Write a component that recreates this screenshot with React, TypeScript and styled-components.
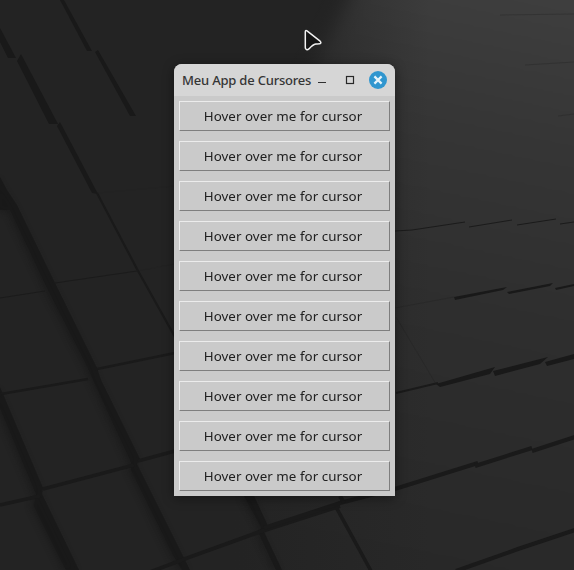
import React from "react";
import styled, { createGlobalStyle } from "styled-components";

const GlobalStyle = createGlobalStyle`
  *, *::before, *::after { box-sizing: border-box; }
  body { margin: 0; background: #232323; overflow: hidden; }
`;

const Desktop = styled.main`
  position: relative;
  width: 574px;
  height: 570px;
  padding: 64px 179px 0 174px;
  overflow: hidden;
  background: #232323;
`;

const Wallpaper = styled.svg`
  position: absolute;
  inset: 0;
`;

const Pointer = styled.svg`
  position: absolute;
  left: 302px;
  top: 27px;
`;

const AppWindow = styled.section`
  position: relative;
  width: 221px;
  height: 432px;
  border-radius: 8px 8px 0 0;
  background: #cacaca;
  box-shadow: 0 2px 12px rgba(0, 0, 0, 0.42);
  overflow: hidden;
`;

const TitleBar = styled.header`
  display: flex;
  align-items: center;
  height: 32px;
  padding: 0 8px;
  background: #d6d6d6;
`;

const Title = styled.h1`
  flex: 1;
  margin: 0;
  font: 500 13px/32px "Noto Sans", sans-serif;
  letter-spacing: -0.2px;
  color: #353535;
  white-space: nowrap;
`;

const Controls = styled.div`
  display: flex;
  align-items: center;
  gap: 10px;
`;

const Control = styled.button<{ $accent?: boolean }>`
  display: grid;
  place-items: center;
  width: 18px;
  height: 18px;
  padding: 0;
  border: 0;
  border-radius: 50%;
  background: ${(p) => (p.$accent ? "#3096cf" : "transparent")};
`;

const ButtonList = styled.div`
  display: grid;
  grid-auto-rows: 30px;
  gap: 10px;
  padding: 5px;
`;

const HoverButton = styled.button<{ $cursor: string }>`
  padding: 0 3px 0 0;
  border: 1px solid;
  border-color: #ececec #7e7e7e #7e7e7e #ececec;
  border-radius: 0;
  background: #cacaca;
  color: #202020;
  font: 400 13.33px/28px "Noto Sans", sans-serif;
  letter-spacing: 0.06px;
  white-space: nowrap;
  cursor: ${(p) => p.$cursor};
`;

const cursors = [
  "pointer", "crosshair", "text", "wait", "help",
  "move", "progress", "not-allowed", "grab", "cell",
];

const blocks = [
  "60,0 64,0 92,51 87,51",
  "95,52 98,50 136,116 130,116",
  "0,28 16,58 8,58 0,42",
  "21,54 17,61 49,124 58,124",
  "60,122 57,126 92,193 98,194",
  "454,297 455,300 503,290 507,287",
  "507,292 509,294 550,286 553,283",
  "555,288 556,290 574,286 574,284",
  "436,384 440,387 490,374 495,367",
  "493,371 495,376 540,364 548,357",
  "545,362 547,366 574,359 574,354",
];

const trenches = [
  "0,177 7,190 17,205 55,283 97,368 101,380 140,459 137,464 183,556 190,570 182,570 173,555 131,470 131,462 93,380 88,368 48,290 10,210 0,210",
  "0,387 43,488 42,494 79,570 66,570 34,506 36,494 0,408",
  "244,496 254,496 268,526 264,532 282,570 276,570 259,534 261,527",
];

const seams: [string, number][] = [
  ["M97 193L137 269L175 337", 2.2],
  ["M1 394L88 379", 2.6],
  ["M97 369L175 353", 2.6],
  ["M43 489L134 465", 3.4],
  ["M138 461L175 451", 3.4],
  ["M0 505L40 496", 3.4],
  ["M150 572L190 557L262 531L340 506", 4],
  ["M264 528L340 503L398 488L478 463", 4],
  ["M475 466L532 448", 4],
  ["M532 451L575 437", 4],
  ["M340 496L344 503", 4],
  ["M336 507L371 571", 3.6],
  ["M396 393L438 383", 2],
  ["M456 571L518 549L575 530", 4],
];

const hairlines =
  "M0 298L45 291M55 283L137 271M395 231L412 230L465 222M469 227L512 220M517 225L556 219M560 224L574 222";
const faintLines =
  "M98 193L175 186M137 271L175 264M395 308L454 297M396 317L436 384M500 15L574 14M525 65L574 62M558 116L574 114";

const WallpaperArt = () => (
  <Wallpaper width="574" height="570" viewBox="0 0 574 570" aria-hidden="true">
    <defs>
      <linearGradient id="light" x1="550" y1="0" x2="430" y2="570" gradientUnits="userSpaceOnUse">
        <stop offset="0" stopColor="#3e3e3e" />
        <stop offset=".25" stopColor="#353535" />
        <stop offset=".55" stopColor="#2e2e2e" />
        <stop offset="1" stopColor="#282828" />
      </linearGradient>
      <linearGradient id="fade" x1="230" y1="0" x2="430" y2="0" gradientUnits="userSpaceOnUse">
        <stop offset="0" stopColor="#232323" />
        <stop offset="1" stopColor="#232323" stopOpacity="0" />
      </linearGradient>
      <filter id="wide" x="-20%" y="-20%" width="140%" height="140%" colorInterpolationFilters="sRGB">
        <feGaussianBlur stdDeviation="9" />
      </filter>
      <filter id="soft" x="-30" y="-30" width="634" height="630" filterUnits="userSpaceOnUse" colorInterpolationFilters="sRGB">
        <feGaussianBlur stdDeviation="3" />
      </filter>
      <filter id="edge" x="-10" y="-10" width="594" height="590" filterUnits="userSpaceOnUse" colorInterpolationFilters="sRGB">
        <feGaussianBlur stdDeviation=".6" />
      </filter>
    </defs>
    <rect width="574" height="570" fill="#232323" />
    <path d="M362 -30L310 75L245 180V620H620V-30Z" fill="url(#light)" filter="url(#wide)" />
    <rect x="200" width="240" height="570" fill="url(#fade)" />
    <g fill="#191919" filter="url(#edge)">
      {trenches.map((points) => (
        <g key={points}>
          <polygon points={points} transform="translate(-3 1)" filter="url(#soft)" opacity=".7" />
          <polygon points={points} opacity=".85" />
        </g>
      ))}
      {blocks.map((points) => <polygon key={points} points={points} />)}
      {seams.map(([d, width]) => (
        <path key={d} d={d} fill="none" stroke="#1a1a1a" strokeWidth={width} />
      ))}
      <path d={hairlines} fill="none" stroke="#1b1b1b" strokeWidth="1" />
      <path d={faintLines} fill="none" stroke="#202020" strokeWidth=".7" opacity=".45" />
    </g>
  </Wallpaper>
);

export default function App() {
  return (
    <>
      <GlobalStyle />
      <Desktop>
        <WallpaperArt />
        <AppWindow>
          <TitleBar>
            <Title>Meu App de Cursores</Title>
            <Controls>
              <Control aria-label="Minimizar">
                <svg width="18" height="18"><path d="M5 11.5h8" stroke="#303030" /></svg>
              </Control>
              <Control aria-label="Maximizar">
                <svg width="18" height="18"><rect x="5.5" y="5.5" width="7" height="7" fill="none" stroke="#282828" strokeWidth="1.2" /></svg>
              </Control>
              <Control aria-label="Fechar" $accent>
                <svg width="18" height="18"><path d="M5.4 5.4l7.2 7.2m0-7.2l-7.2 7.2" stroke="#e6f4fb" strokeWidth="2.2" /></svg>
              </Control>
            </Controls>
          </TitleBar>
          <ButtonList>
            {cursors.map((cursor) => (
              <HoverButton key={cursor} $cursor={cursor}>Hover over me for cursor</HoverButton>
            ))}
          </ButtonList>
        </AppWindow>
        <Pointer width="22" height="26" viewBox="0 0 22 26" aria-hidden="true">
          <path
            d="M3.3 4.9Q3.3 3 5 3.9L18.1 14.2Q19.6 15.7 18.2 16.6Q17.7 17 13.8 16.9Q10.8 17.4 6.9 21.9Q5 23.6 3.8 21.9Q3.3 21.2 3.3 20.2Z"
            fill="#151515"
            stroke="#f2f2f2"
            strokeWidth="1.5"
            strokeLinejoin="round"
          />
        </Pointer>
      </Desktop>
    </>
  );
}
